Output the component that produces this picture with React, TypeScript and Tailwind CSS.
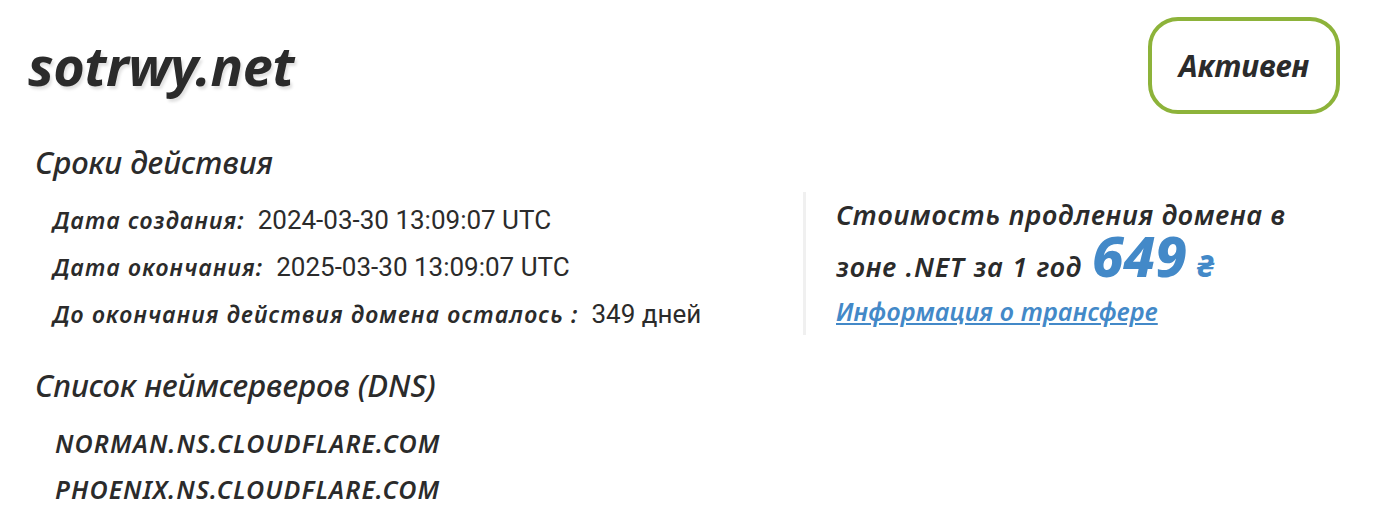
import React from "react";

const dates = [
  { label: "Дата создания:", value: "2024-03-30 13:09:07 UTC" },
  { label: "Дата окончания:", value: "2025-03-30 13:09:07 UTC" },
  { label: "До окончания действия домена осталось :", value: "349 дней" },
];

const nameservers = ["NORMAN.NS.CLOUDFLARE.COM", "PHOENIX.NS.CLOUDFLARE.COM"];

export default function App() {
  return (
    <div className="w-[1390px] h-[508px] bg-white text-[#2b2b2b] overflow-hidden font-['Noto_Sans',sans-serif]">
      <div className="flex items-start justify-between pl-[28px] pr-[50px] pt-[17px]">
        <h1 className="mt-[16px] text-[54px] leading-[64px] font-bold italic tracking-[-0.5px] [text-shadow:2px_3px_3px_rgba(0,0,0,0.12)]">
          sotrwy.net
        </h1>
        <div className="flex h-[97px] w-[192px] items-center justify-center rounded-[30px] border-[4px] border-[#8db33a] text-[30px] font-bold italic">
          Активен
        </div>
      </div>

      <div className="flex pl-[35px]">
        <div className="w-[768px]">
          <h2 className="mt-[30px] text-[31px] leading-[36px] font-medium italic">
            Сроки действия
          </h2>
          <div className="mt-[24px] flex flex-col gap-[14px] pl-[18px]">
            {dates.map((d) => (
              <p key={d.label} className="flex items-center gap-[13px] leading-[33px]">
                <span className="text-[23px] font-semibold italic tracking-[1.2px]">{d.label}</span>
                <span className="font-['Roboto',sans-serif] text-[26px]">{d.value}</span>
              </p>
            ))}
          </div>
          <h2 className="mt-[36px] text-[31px] leading-[36px] font-medium italic">
            Список неймсерверов (DNS)
          </h2>
          <div className="mt-[24px] flex flex-col gap-[13px] pl-[20px]">
            {nameservers.map((ns) => (
              <p key={ns} className="text-[25px] leading-[33px] font-semibold italic tracking-[1.1px]">
                {ns}
              </p>
            ))}
          </div>
        </div>

        <div className="mt-[78px] h-[143px] border-l-[3px] border-[#f0f0f0] pl-[30px]">
          <p className="text-[27px] leading-[46px] font-semibold italic tracking-[0.8px]">
            Стоимость продления домена в
          </p>
          <div className="mt-[-3px] flex h-[50px] items-baseline text-[27px] font-semibold italic tracking-[0.8px] [word-spacing:1px]">
            <span className="leading-[50px]">зоне .NET за 1 год</span>
            <span className="ml-[10px] text-[56px] leading-[40px] font-extrabold tracking-normal text-[#4389c8]">649</span>
            <span className="ml-[10px] text-[30px] leading-[50px] font-extrabold text-[#4389c8]">₴</span>
          </div>
          <a
            href="#"
            className="mt-[9px] block text-[25px] leading-[34px] font-semibold italic tracking-[0.2px] text-[#4389c8] underline"
          >
            Информация о трансфере
          </a>
        </div>
      </div>
    </div>
  );
}
